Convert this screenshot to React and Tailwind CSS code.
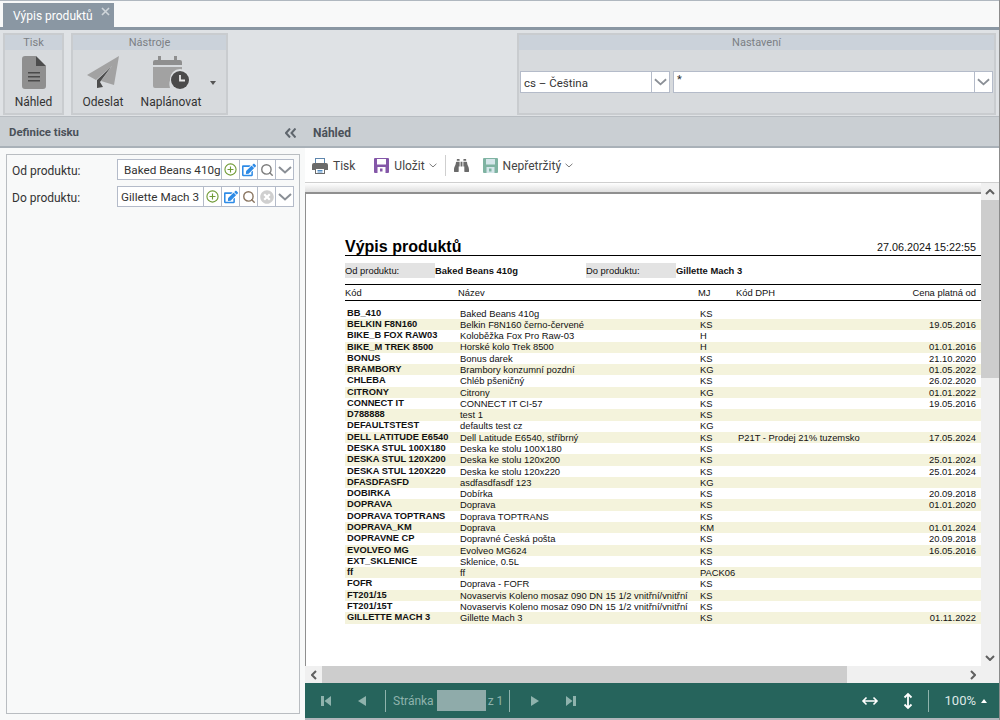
import React from "react";
import { FaBinoculars, FaEdit, FaTimesCircle } from "react-icons/fa";
import { Search } from "lucide-react";

const rows = [
  ["BB_410", "Baked Beans 410g", "KS", "", ""],
  ["BELKIN F8N160", "Belkin F8N160 černo-červené", "KS", "", "19.05.2016"],
  ["BIKE_B FOX RAW03", "Koloběžka Fox Pro Raw-03", "H", "", ""],
  ["BIKE_M TREK 8500", "Horské kolo Trek 8500", "H", "", "01.01.2016"],
  ["BONUS", "Bonus darek", "KS", "", "21.10.2020"],
  ["BRAMBORY", "Brambory konzumní pozdní", "KG", "", "01.05.2022"],
  ["CHLEBA", "Chléb pšeničný", "KS", "", "26.02.2020"],
  ["CITRONY", "Citrony", "KG", "", "01.01.2022"],
  ["CONNECT IT", "CONNECT IT CI-57", "KS", "", "19.05.2016"],
  ["D788888", "test 1", "KS", "", ""],
  ["DEFAULTSTEST", "defaults test cz", "KG", "", ""],
  ["DELL LATITUDE E6540", "Dell Latitude E6540, stříbrný", "KS", "P21T - Prodej 21% tuzemsko", "17.05.2024"],
  ["DESKA STUL 100X180", "Deska ke stolu 100X180", "KS", "", ""],
  ["DESKA STUL 120X200", "Deska ke stolu 120x200", "KS", "", "25.01.2024"],
  ["DESKA STUL 120X220", "Deska ke stolu 120x220", "KS", "", "25.01.2024"],
  ["DFASDFASFD", "asdfasdfasdf 123", "KG", "", ""],
  ["DOBIRKA", "Dobírka", "KS", "", "20.09.2018"],
  ["DOPRAVA", "Doprava", "KS", "", "01.01.2020"],
  ["DOPRAVA TOPTRANS", "Doprava TOPTRANS", "KS", "", ""],
  ["DOPRAVA_KM", "Doprava", "KM", "", "01.01.2024"],
  ["DOPRAVNE CP", "Dopravné Česká pošta", "KS", "", "20.09.2018"],
  ["EVOLVEO MG", "Evolveo MG624", "KS", "", "16.05.2016"],
  ["EXT_SKLENICE", "Sklenice, 0.5L", "KS", "", ""],
  ["ff", "ff", "PACK06", "", ""],
  ["FOFR", "Doprava - FOFR", "KS", "", ""],
  ["FT201/15", "Novaservis Koleno mosaz 090 DN 15 1/2 vnitřní/vnitřní", "KS", "", ""],
  ["FT201/15T", "Novaservis Koleno mosaz 090 DN 15 1/2 vnitřní/vnitřní", "KS", "", ""],
  ["GILLETTE MACH 3", "Gillette Mach 3", "KS", "", "01.11.2022"],
];

const Chevron = ({ w = 14, h = 8, color = "#8a8f96", sw = 2 }) => (
  <svg width={w} height={h} viewBox="0 0 14 8" fill="none">
    <path d="M1 1l6 5.500L13 1" stroke={color} strokeWidth={sw} />
  </svg>
);

const DocIcon = () => (
  <svg width="24" height="33" viewBox="0 0 24 33">
    <path d="M3 0h11v9a1 1 0 0 0 1 1h9v20a3 3 0 0 1-3 3H3a3 3 0 0 1-3-3V3a3 3 0 0 1 3-3z" fill="#8f8f8f" />
    <path d="M14 0l10 10H14z" fill="#4d4d4d" />
    <path d="M6 16h12v1.600H6zM6 20h12v1.600H6zM6 24h12v1.600H6z" fill="#4a4a4a" />
  </svg>
);

const PlaneIcon = () => (
  <svg width="33" height="33" viewBox="0 0 33 33">
    <path d="M32 0L0 19L9 24L25 10L14 25L27 29z" fill="#a2a2a2" />
    <path d="M24 11L10 24V32L16 31L13 26z" fill="#4d4d4d" />
  </svg>
);

const CalClockIcon = () => (
  <svg width="37" height="33" viewBox="0 0 37 33">
    <path d="M5 0h3v4h13V0h3v4h3a2 2 0 0 1 2 2v3H0V6a2 2 0 0 1 2-2h3z" fill="#8f8f8f" />
    <path d="M0 11h29v5a12 12 0 0 0-12 16H2a2 2 0 0 1-2-2z" fill="#a2a2a2" />
    <circle cx="27" cy="23" r="10" fill="#dcdfe1" />
    <circle cx="27" cy="24" r="9" fill="#4a4a4a" />
    <path d="M27 19v5.500h5" stroke="#e8e8e8" strokeWidth="1.800" fill="none" />
  </svg>
);

const PlusCircle = () => (
  <svg width="13" height="13" viewBox="0 0 14 14" fill="none">
    <circle cx="7" cy="7" r="6" stroke="#6f9a35" strokeWidth="1.200" />
    <path d="M7 3.800v6.400M3.800 7h6.400" stroke="#6f9a35" strokeWidth="1.200" />
  </svg>
);

const PrintIcon = () => (
  <svg width="16" height="16" viewBox="0 0 16 16">
    <rect x="3.500" y="0.500" width="9" height="5" fill="#fff" stroke="#5f86ad" />
    <path d="M2 5h12a2 2 0 0 1 2 2v5h-3v-2H3v2H0V7a2 2 0 0 1 2-2z" fill="#6a6a6a" />
    <rect x="3.500" y="10.500" width="9" height="5" fill="#fff" stroke="#6a6a6a" />
    <path d="M5.500 12.500h5M5.500 14h5" stroke="#4b8ac4" />
  </svg>
);

const Floppy = ({ base, light, mark }) => (
  <svg width="15" height="15" viewBox="0 0 15 15">
    <rect width="15" height="15" rx="1" fill={base} />
    <rect x="3" y="1" width="9" height="5.500" fill={light} />
    <rect x="3.500" y="9" width="8" height="6" fill={light} />
    <rect x="6" y="10.500" width="2.500" height="3" fill={mark} />
  </svg>
);

const Cell = ({ children }) => (
  <div className="w-[18px] h-full shrink-0 flex items-center justify-center bg-white border-l border-[#b4bbc9]">
    {children}
  </div>
);

const Lookup = ({ label, value, pad, textW, clear, searchColor }) => (
  <div className="flex items-center h-[21px]">
    <div className="w-[110px] shrink-0 pl-[5px] pt-[2px] text-[12px] text-[#333] leading-none">{label}</div>
    <div className="flex shrink-0 h-[21px] border border-[#b4bbc9] bg-white">
      <div className={`${textW} h-full flex items-center pt-[2px] ${pad} text-[11.7px] text-[#333] whitespace-nowrap overflow-hidden`}>{value}</div>
      <Cell><PlusCircle /></Cell>
      <Cell><FaEdit className="text-[14px] text-[#2e8be6]" /></Cell>
      <Cell><Search size={14} strokeWidth={2.4} color={searchColor} /></Cell>
      {clear && <Cell><FaTimesCircle className="text-[14px] text-[#cfcfcf]" /></Cell>}
      <Cell><Chevron /></Cell>
    </div>
  </div>
);

const Group = ({ title, className, children }) => (
  <div className={`h-[82px] border-2 border-[#c9cccf] bg-[#d7dadd] flex flex-col ${className}`}>
    <div className="h-[15px] shrink-0 bg-[#cbd2da] text-[11px] text-[#7b7f84] text-center leading-[15px]">{title}</div>
    {children}
  </div>
);

const BigButton = ({ icon, label, className }) => (
  <div className={`flex flex-col items-center ${className}`}>
    <div className="h-[33px] mt-[6px] flex items-center justify-center">{icon}</div>
    <div className="mt-[5px] text-[12px] leading-[16px] text-[#333] whitespace-nowrap">{label}</div>
  </div>
);

const Select = ({ className, value, tight }) => (
  <div className={`h-[22px] flex border border-[#b4bbc9] bg-white ${className}`}>
    <div className={`flex-1 pl-[3px] text-[#333] ${tight ? "text-[11px] leading-[15px]" : "text-[11.5px] leading-[22px]"}`}>{value}</div>
    <div className="w-[18px] border-l border-[#b4bbc9] flex items-center justify-center"><Chevron w={13} /></div>
  </div>
);

const Row = ({ r, i }) => (
  <div className={`h-[11.29px] flex items-center text-[9.4px] leading-none text-[#111] ${i % 2 ? "bg-[#f4f3dc]" : ""}`}>
    <div className="w-[115px] shrink-0 pl-[2px] font-bold text-[9.3px] whitespace-nowrap">{r[0]}</div>
    <div className="w-[240px] shrink-0 whitespace-nowrap">{r[1]}</div>
    <div className="w-[38px] shrink-0 whitespace-nowrap">{r[2]}</div>
    <div className="flex-1 whitespace-nowrap">{r[3]}</div>
    <div className="pr-[5px]">{r[4]}</div>
  </div>
);

const Tool = ({ icon, label, chevron, className }) => (
  <div className={`flex items-center text-[12px] text-[#444] ${className}`}>
    {icon}
    <span className="ml-[5px]">{label}</span>
    {chevron && <span className="ml-[4px]"><Chevron w={8} h={5} color="#666" sw={1.5} /></span>}
  </div>
);

const Nav = ({ d, w = 12, h = 16 }) => (
  <svg width={w} height={h} viewBox={`0 0 ${w} 16`}><path d={d} fill="#8fb3ad" /></svg>
);

export default function App() {
  return (
    <div className="w-[1000px] h-[720px] overflow-hidden flex flex-col bg-[#f8f9f9] border-r border-[#8c8c8c] font-['Roboto','Noto_Sans',sans-serif]">
      {/* tab strip */}
      <div className="h-[27px] shrink-0 border-t border-[#b0b8c0] pl-[3px] pt-[2px] flex">
        <div className="w-[111px] h-[24px] bg-[#8a97a3] relative pl-[10px] text-[12px] leading-[26px] text-white">
          Výpis produktů
          <svg width="9" height="9" viewBox="0 0 9 9" fill="none" className="absolute right-[4px] top-[4px]">
            <path d="M1 1l7 7M8 1L1 8" stroke="#cfd5da" strokeWidth="1.600" />
          </svg>
        </div>
      </div>
      <div className="h-[3px] shrink-0 bg-[#8a97a3]" />

      {/* ribbon */}
      <div className="h-[87px] shrink-0 bg-[#dfe2e5] border-b border-[#b8bdc2] flex pt-[3px] pl-[3px] pr-[3px]">
        <Group title="Tisk" className="w-[61px]">
          <BigButton icon={<DocIcon />} label="Náhled" />
        </Group>
        <Group title="Nástroje" className="w-[157px] ml-[7px]">
          <div className="flex relative">
            <BigButton icon={<PlaneIcon />} label="Odeslat" className="w-[60px]" />
            <BigButton icon={<CalClockIcon />} label="Naplánovat" className="w-[72px] ml-[2px]" />
            <span className="absolute left-[137px] top-[31px] w-0 h-0 border-x-[3.500px] border-x-transparent border-t-[4px] border-t-[#555]" />
          </div>
        </Group>
        <Group title="Nastavení" className="w-[479px] ml-auto">
          <div className="flex gap-[3px] pl-[1px] pt-[21px]">
            <Select className="w-[150px]" value="cs – Čeština" />
            <Select className="w-[320px]" value="*" tight />
          </div>
        </Group>
      </div>

      {/* section headers */}
      <div className="h-[31px] shrink-0 bg-[#cacfd3] border-b-2 border-[#a9b1b8] flex items-center pt-[3px] font-bold text-[#4b5159]">
        <div className="w-[305px] shrink-0 pl-[9px] flex items-center justify-between pr-[9px] text-[11.4px]">
          <span>Definice tisku</span>
          <svg width="11" height="10" viewBox="0 0 11 10" fill="none">
            <path d="M5 .500L1 5l4 4.500M10.500 .500L6.500 5l4 4.500" stroke="#5f666d" strokeWidth="2" />
          </svg>
        </div>
        <span className="pl-[8px] text-[12px]">Náhled</span>
      </div>

      {/* body */}
      <div className="flex-1 flex min-h-0">
        <div className="w-[305px] shrink-0 pl-[6px] pt-[6px] pr-[5px] pb-[6px]">
          <div className="h-full border border-[#b9bdc1] pt-[4px] flex flex-col gap-[6px]">
            <Lookup label="Od produktu:" value="Baked Beans 410g" pad="pl-[6px]" textW="w-[103px]" searchColor="#7d7d7d" />
            <Lookup label="Do produktu:" value="Gillette Mach 3" pad="pl-[3px]" textW="w-[85px]" searchColor="#8a7560" clear />
          </div>
        </div>

        <div className="flex-1 min-w-0 flex flex-col bg-white">
          {/* toolbar */}
          <div className="h-[35px] shrink-0 border-b border-[#cfcfcf] flex items-center pt-[1px] pl-[7px]">
            <Tool icon={<PrintIcon />} label="Tisk" />
            <Tool icon={<Floppy base="#8457a8" light="#ffffff" mark="#8457a8" />} label="Uložit" chevron className="ml-[19px]" />
            <div className="w-px h-[21px] bg-[#cfcfcf] ml-[8px]" />
            <FaBinoculars className="text-[15px] text-[#6a6a6a] ml-[8px]" />
            <Tool icon={<Floppy base="#7fb3a2" light="#d5e6ea" mark="#7fb3a2" />} label="Nepřetržitý" chevron className="ml-[14px]" />
          </div>

          {/* viewer */}
          <div className="flex-1 min-h-0 flex flex-col">
            <div className="flex-1 min-h-0 flex">
              <div className="flex-1 min-w-0 flex flex-col">
                <div className="h-[9px] shrink-0 bg-gradient-to-b from-white to-[#dedede]" />
                <div className="flex-1 min-h-0 border-t-2 border-l border-[#8f8f8f] bg-white pl-[39px] pt-[43px] text-[#111] font-['Liberation_Sans',Arial,sans-serif]">
                  <div className="flex items-end justify-between h-[19px] border-b border-black">
                    <span className="text-[16px] font-bold leading-[16px] text-black">Výpis produktů</span>
                    <span className="text-[10.8px] leading-[16px] pr-[5px]">27.06.2024 15:22:55</span>
                  </div>
                  <div className="mt-[7px] h-[15px] flex items-center text-[9.4px] leading-none">
                    <div className="w-[90px] h-full bg-[#e3e3e3] flex items-center">Od produktu:</div>
                    <div className="w-[151px] font-bold">Baked Beans 410g</div>
                    <div className="w-[90px] h-full bg-[#e3e3e3] flex items-center">Do produktu:</div>
                    <div className="font-bold">Gillette Mach 3</div>
                  </div>
                  <div className="mt-[6px] h-[17px] border-y border-black flex items-center text-[9.4px] leading-none">
                    <div className="w-[113px]">Kód</div>
                    <div className="w-[240px]">Název</div>
                    <div className="w-[38px]">MJ</div>
                    <div className="flex-1">Kód DPH</div>
                    <div className="pr-[5px]">Cena platná od</div>
                  </div>
                  <div className="mt-[6.700px]">
                    {rows.map((r, i) => <Row key={r[0]} r={r} i={i} />)}
                  </div>
                </div>
              </div>
              {/* v scrollbar */}
              <div className="w-[18px] shrink-0 bg-[#f0f0f0] flex flex-col items-center">
                <div className="h-[17px] w-full flex items-center justify-center">
                  <svg width="10" height="6" viewBox="0 0 10 6" fill="none"><path d="M1 5l4-4 4 4" stroke="#606060" strokeWidth="2" /></svg>
                </div>
                <div className="w-full h-[178px] bg-[#cdcdcd]" />
                <div className="flex-1" />
                <div className="h-[17px] w-full flex items-center justify-center">
                  <svg width="10" height="6" viewBox="0 0 10 6" fill="none"><path d="M1 1l4 4 4-4" stroke="#606060" strokeWidth="2" /></svg>
                </div>
              </div>
            </div>
            {/* h scrollbar */}
            <div className="h-[17px] shrink-0 flex bg-[#f0f0f0]">
              <div className="w-[17px] flex items-center justify-center">
                <svg width="6" height="10" viewBox="0 0 6 10" fill="none"><path d="M5 1L1 5l4 4" stroke="#606060" strokeWidth="2" /></svg>
              </div>
              <div className="w-[525px] bg-[#cdcdcd]" />
              <div className="flex-1" />
              <div className="w-[17px] mr-[18px] flex items-center justify-center">
                <svg width="6" height="10" viewBox="0 0 6 10" fill="none"><path d="M1 1l4 4-4 4" stroke="#606060" strokeWidth="2" /></svg>
              </div>
            </div>
          </div>

          {/* pager */}
          <div className="h-[35px] shrink-0 bg-[#26645c] flex items-center text-[12px] text-[#8fb3ad] pl-[16px]">
            <Nav w={10} d="M0 3h3v10H0zM10 3v10L3.500 8z" />
            <span className="ml-[27px]"><Nav w={8} d="M8 3v10L0 8z" /></span>
            <div className="w-px h-[22px] bg-[#8fb3ad] ml-[19px]" />
            <span className="ml-[7px]">Stránka</span>
            <div className="w-[49px] h-[21px] bg-[#8fabaa] ml-[3px]" />
            <span className="ml-[2px]">z 1</span>
            <div className="w-px h-[22px] bg-[#8fb3ad] ml-[6px]" />
            <span className="ml-[21px]"><Nav w={8} d="M0 3v10l8-5z" /></span>
            <span className="ml-[27px]"><Nav w={10} d="M0 3v10l6.500-5zM7 3h3v10H7z" /></span>
            <svg width="18" height="10" viewBox="0 0 18 10" fill="none" className="ml-auto">
              <path d="M2 5h14M5.500 1.500L2 5l3.500 3.500M12.500 1.500L16 5l-3.500 3.500" stroke="#fff" strokeWidth="1.600" />
            </svg>
            <svg width="10" height="18" viewBox="0 0 10 18" fill="none" className="ml-[24px]">
              <path d="M5 2v14M1.500 5.500L5 2l3.500 3.500M1.500 12.500L5 16l3.500-3.500" stroke="#fff" strokeWidth="1.800" />
            </svg>
            <div className="w-px h-[22px] bg-[#8fb3ad] ml-[15px]" />
            <span className="ml-[16px] text-[13px] text-[#dfe9e7]">100%</span>
            <span className="ml-[5px] mr-[12px] w-0 h-0 border-x-[3.500px] border-x-transparent border-b-[4px] border-b-white" />
          </div>
          <div className="h-[2px] shrink-0 bg-[#b0b6bb]" />
        </div>
      </div>
    </div>
  );
}
